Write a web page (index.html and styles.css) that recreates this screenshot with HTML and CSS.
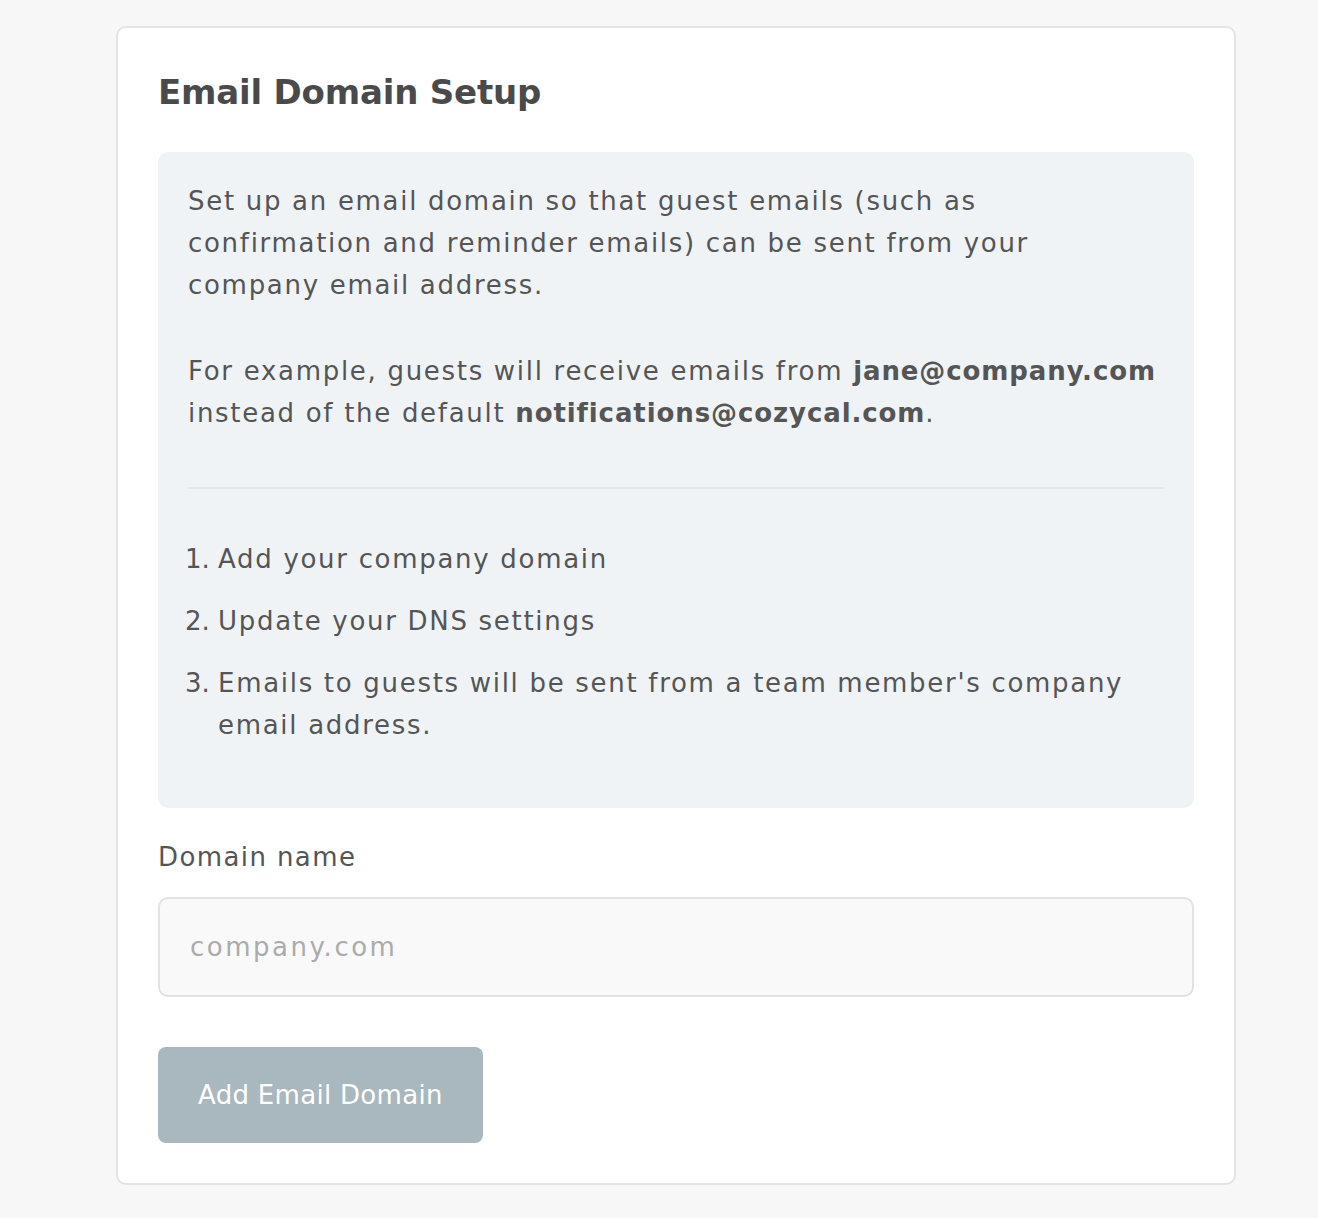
FILE: index.html
```html
<!DOCTYPE html>
<html lang="en">
<head>
  <meta charset="UTF-8" />
  <meta name="viewport" content="width=device-width, initial-scale=1.0" />
  <title>Email Domain Setup</title>
  <link rel="stylesheet" href="styles.css">
</head>
<body>
  <div class="page">
    <div class="card">
      <h1>Email Domain Setup</h1>

      <div class="info-box">
        <p>Set up an email domain so that guest emails (such as confirmation and reminder emails) can be sent from your company email address.</p>
        <p>For example, guests will receive emails from <strong>jane@company.com</strong> instead of the default <strong>notifications@cozycal.com</strong>.</p>
        <hr>
        <ol>
          <li>Add your company domain</li>
          <li>Update your DNS settings</li>
          <li>Emails to guests will be sent from a team member's company email address.</li>
        </ol>
      </div>

      <form class="domain-form">
        <label for="domain">Domain name</label>
        <input type="text" id="domain" placeholder="company.com" />
        <button type="submit" disabled>Add Email Domain</button>
      </form>
    </div>
  </div>
</body>
</html>
```

FILE: styles.css
```css
* {
  margin: 0;
  padding: 0;
  box-sizing: border-box;
  font-family: 'DejaVu Sans', Verdana, sans-serif;
}

body {
  background: #f7f7f7;
  color: #555;
}

.page {
  padding: 26px 0 34px 116px;
}

.card {
  width: 1120px;
  background: white;
  border: 2px solid #e4e4e4;
  border-radius: 10px;
  padding: 40px;
}

.card h1 {
  font-size: 34px;
  line-height: 42px;
  font-weight: 600;
  letter-spacing: -0.2px;
  color: #4a4a4a;
  padding-top: 3px;
  margin-bottom: 39px;
}

.info-box {
  background: #eff3f6;
  border-radius: 10px;
  padding: 28px 30px 42px;
  font-size: 26px;
  line-height: 42px;
  letter-spacing: 1.7px;
}

.info-box p {
  margin-bottom: 44px;
}

.info-box strong {
  font-weight: 700;
  letter-spacing: 0.9px;
  white-space: nowrap;
}

.info-box hr {
  border: none;
  height: 2px;
  background: #e2e6ea;
  margin: 53px 0 49px;
}

.info-box ol {
  padding-left: 30px;
}

.info-box li {
  margin-bottom: 20px;
}

.info-box li::marker {
  letter-spacing: 0;
}

.domain-form {
  display: flex;
  flex-direction: column;
  align-items: flex-start;
}

.domain-form label {
  font-size: 26px;
  line-height: 42px;
  letter-spacing: 1.4px;
  margin-top: 28px;
}

.domain-form input {
  width: 100%;
  height: 100px;
  margin-top: 19px;
  padding: 0 30px;
  border: 2px solid #e2e2e2;
  border-radius: 10px;
  background-color: #f9f9f9;
  font-size: 26px;
  letter-spacing: 2.5px;
  color: #555;
}

.domain-form input::placeholder {
  color: #ababab;
}

.domain-form input:focus {
  outline: none;
  border-color: #c9d2d8;
}

.domain-form button {
  margin-top: 50px;
  height: 96px;
  padding: 0 40px;
  border: none;
  border-radius: 8px;
  background-color: #a9b7be;
  color: white;
  font-size: 26px;
  letter-spacing: 0.3px;
  cursor: default;
}
```
